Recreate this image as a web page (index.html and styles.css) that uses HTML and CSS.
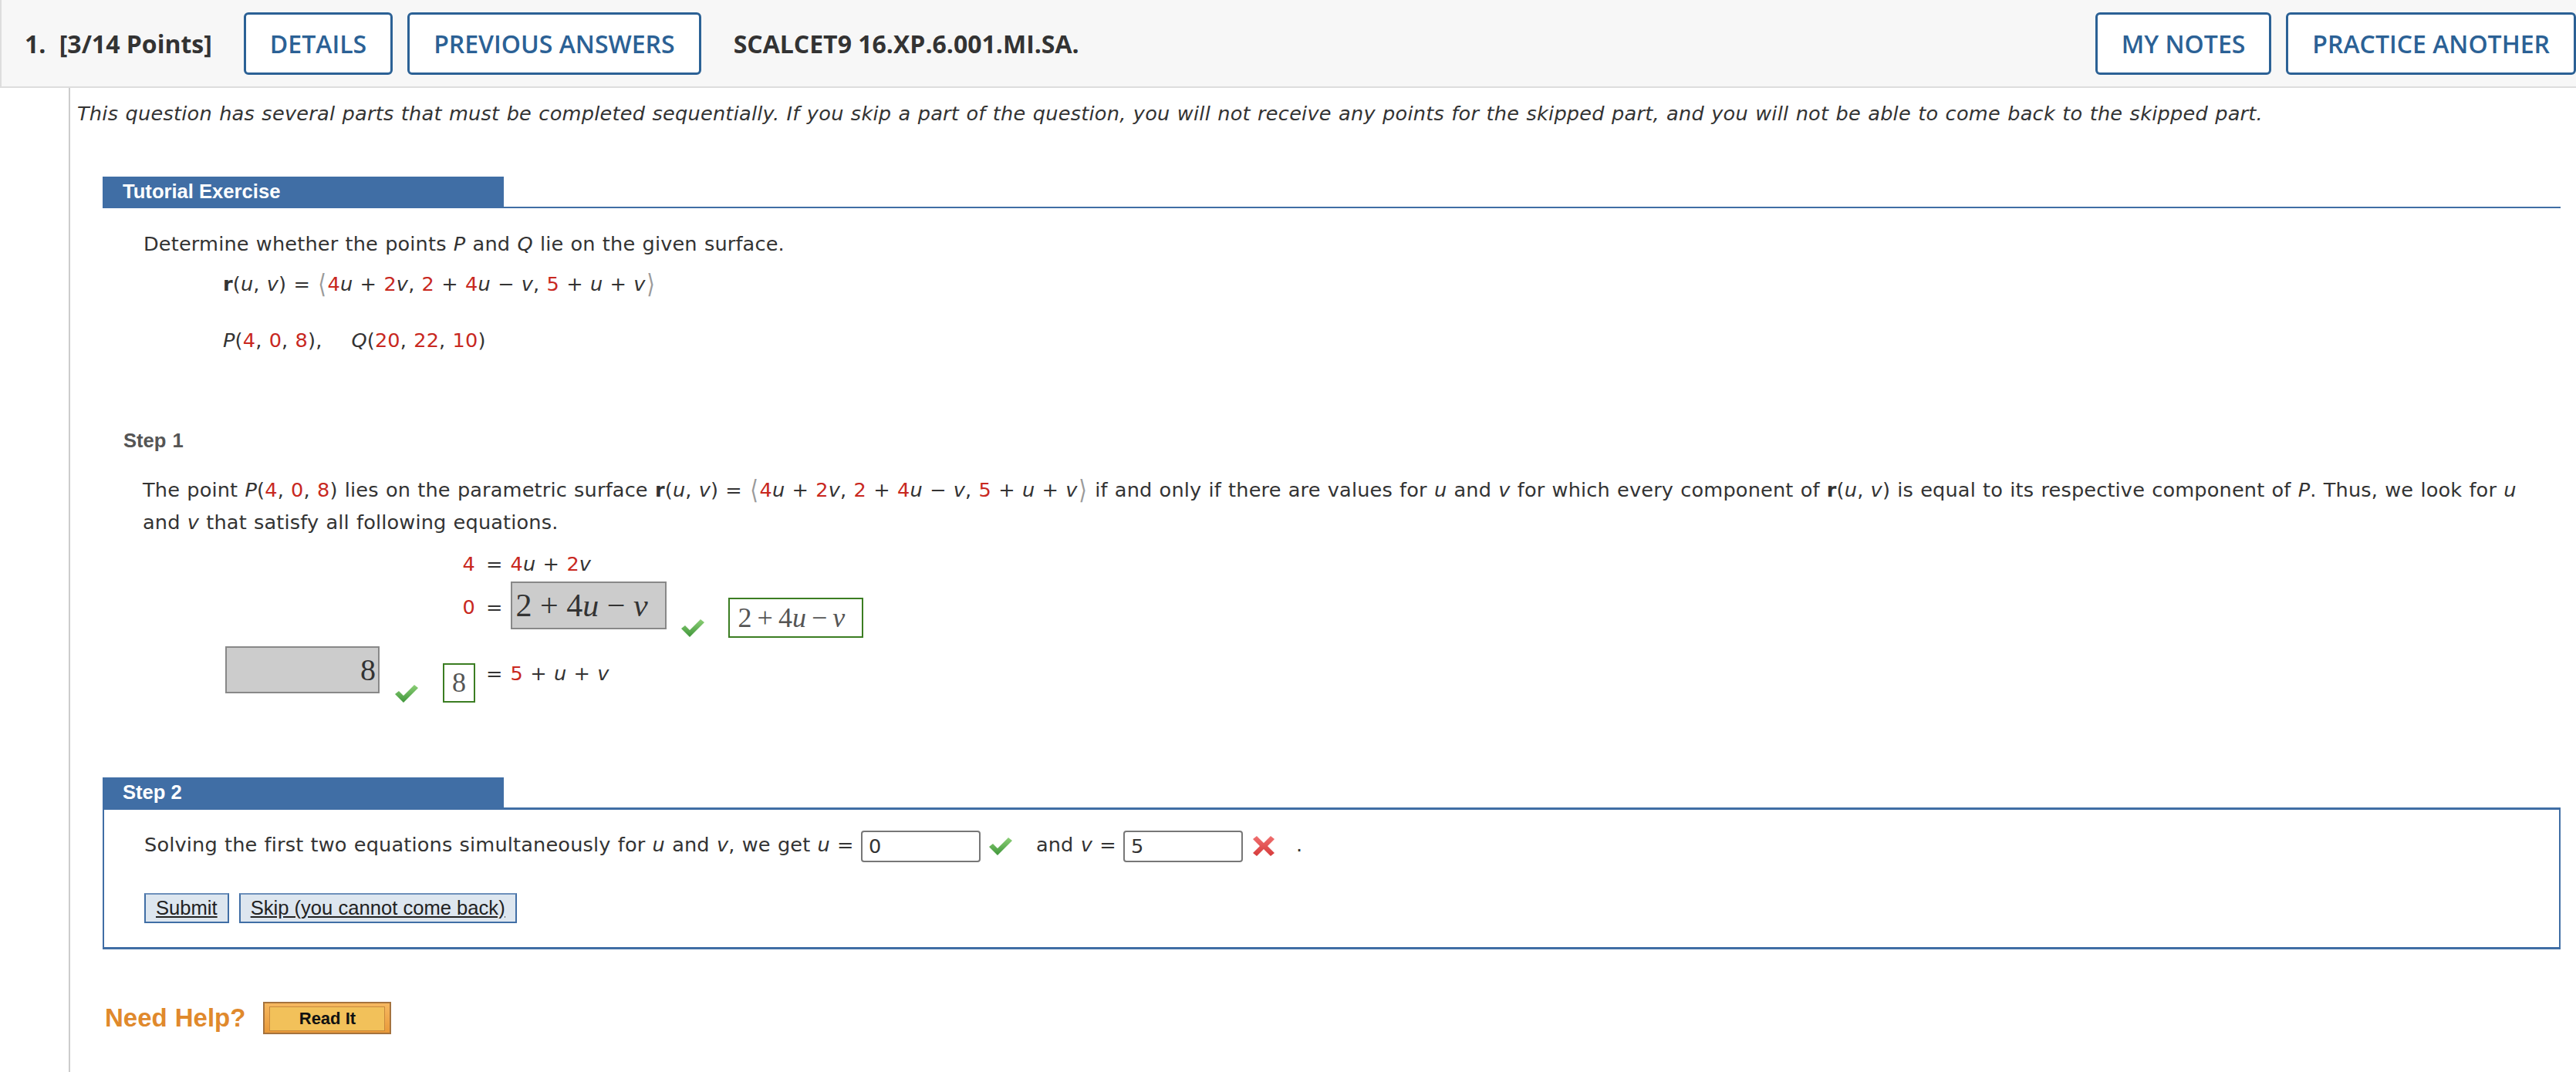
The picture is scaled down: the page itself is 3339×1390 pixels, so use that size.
FILE: index.html
```html
<!DOCTYPE html>
<html lang="en">
<head>
    <meta charset="UTF-8">
    <meta name="viewport" content="width=device-width, initial-scale=1.0">
    <title>SCALCET9 16.XP.6.001.MI.SA.</title>
    <link rel="stylesheet" href="styles.css">
</head>
<body>
    <div class="qheader">
        <div class="qtitle"><span class="qnum">1.</span> [3/14 Points]</div>
        <button class="hbtn first">DETAILS</button>
        <button class="hbtn">PREVIOUS ANSWERS</button>
        <div class="qcode">SCALCET9 16.XP.6.001.MI.SA.</div>
        <button class="hbtn push">MY NOTES</button>
        <button class="hbtn">PRACTICE ANOTHER</button>
    </div>

    <div class="content">
        <p class="intro">This question has several parts that must be completed sequentially. If you skip a part of the question, you will not receive any points for the skipped part, and you will not be able to come back to the skipped part.</p>

        <div class="tutorial">
            <div class="tut-bar"><span class="tab">Tutorial Exercise</span></div>

            <p class="determine">Determine whether the points <i>P</i> and <i>Q</i> lie on the given surface.</p>
            <p class="mline first-m"><b>r</b>(<i>u</i>, <i>v</i>) = <span class="ang">⟨</span><span class="red">4</span><i>u</i> + <span class="red">2</span><i>v</i>, <span class="red">2</span> + <span class="red">4</span><i>u</i> − <i>v</i>, <span class="red">5</span> + <i>u</i> + <i>v</i><span class="ang">⟩</span></p>
            <p class="mline second-m"><i>P</i>(<span class="red">4</span>, <span class="red">0</span>, <span class="red">8</span>),<span class="gap"></span><i>Q</i>(<span class="red">20</span>, <span class="red">22</span>, <span class="red">10</span>)</p>

            <div class="step-title">Step 1</div>
            <p class="step-text">The point <i>P</i>(<span class="red">4</span>, <span class="red">0</span>, <span class="red">8</span>) lies on the parametric surface <b>r</b>(<i>u</i>, <i>v</i>) = <span class="ang">⟨</span><span class="red">4</span><i>u</i> + <span class="red">2</span><i>v</i>, <span class="red">2</span> + <span class="red">4</span><i>u</i> − <i>v</i>, <span class="red">5</span> + <i>u</i> + <i>v</i><span class="ang">⟩</span> if and only if there are values for <i>u</i> and <i>v</i> for which every component of <b>r</b>(<i>u</i>, <i>v</i>) is equal to its respective component of <i>P</i>. Thus, we look for <i>u</i> and <i>v</i> that satisfy all following equations.</p>

            <div class="eqs">
                <div class="lhs"><span class="red">4</span></div>
                <div class="eq">=</div>
                <div class="rhs"><span class="red">4</span><i>u</i> + <span class="red">2</span><i>v</i></div>

                <div class="lhs r2"><span class="red">0</span></div>
                <div class="eq r2">=</div>
                <div class="rhs r2 boxrow">
                    <span class="given wide">2 + 4<i>u</i> − <i>v</i></span>
                    <svg class="check c2" viewBox="0 0 30 25"><defs><linearGradient id="g1" x1="0" y1="0" x2="0" y2="1"><stop offset="0" stop-color="#8ccf76"/><stop offset="1" stop-color="#3f963a"/></linearGradient></defs><polygon points="0,13 5,9 11,15 25,1 30,5 11,24" fill="url(#g1)"/></svg>
                    <span class="correct wide">2 + 4<i>u</i> − <i>v</i></span>
                </div>

                <div class="lhs r3 boxrow">
                    <span class="given num">8</span>
                    <svg class="check c3" viewBox="0 0 30 25"><polygon points="0,13 5,9 11,15 25,1 30,5 11,24" fill="url(#g1)"/></svg>
                    <span class="correct small">8</span>
                </div>
                <div class="eq r3">=</div>
                <div class="rhs r3"><span class="red">5</span> + <i>u</i> + <i>v</i></div>
            </div>

            <div class="step2">
                <div class="tut-bar thick"><span class="tab">Step 2</span></div>
                <div class="step-box">
                    <div class="answer-line">Solving the first two equations simultaneously for <i>u</i> and <i>v</i>, we get <i>u</i> = <input class="ans" type="text" value="0" readonly><svg class="check ok" viewBox="0 0 30 25"><polygon points="0,13 5,9 11,15 25,1 30,5 11,24" fill="url(#g1)"/></svg>and <i>v</i> = <input class="ans" type="text" value="5" readonly><svg class="cross" viewBox="0 0 28 26"><defs><linearGradient id="g2" x1="0" y1="0" x2="0" y2="1"><stop offset="0" stop-color="#f07070"/><stop offset="1" stop-color="#d63a3a"/></linearGradient></defs><polygon points="0,4 5,0 14,9 23,0 28,4 19,13 28,22 23,26 14,17 5,26 0,22 9,13" fill="url(#g2)"/></svg>.</div>
                    <div class="step-btns">
                        <button class="sbtn">Submit</button>
                        <button class="sbtn">Skip (you cannot come back)</button>
                    </div>
                </div>
            </div>

            <div class="need-help">
                <span class="help-label">Need Help?</span>
                <button class="read-it"><span>Read It</span></button>
            </div>
        </div>
    </div>
</body>
</html>
```

FILE: styles.css
```css
body {
    margin: 0;
    overflow: hidden;
    background: #fff;
    color: #333;
    font-family: "DejaVu Sans", Verdana, sans-serif;
    font-size: 25.6px;
    letter-spacing: 0.15px;
    word-spacing: 0.9px;
}
p {
    margin: 0;
}
.red {
    color: #c8281f;
}
.ang {
    display: inline-block;
    color: #9a9a9a;
    font-size: 34px;
    line-height: 20px;
    vertical-align: -3px;
    transform: scaleX(0.8);
}

/* question header */
.qheader {
    display: flex;
    align-items: center;
    height: 112px;
    background: #f7f7f7;
    border-bottom: 2px solid #ddd;
    border-left: 2px solid #ddd;
    font-family: "Open Sans", sans-serif;
    letter-spacing: 0;
    word-spacing: 0;
}
.qtitle {
    margin-left: 30px;
    font-size: 32px;
    font-weight: 700;
    color: #333;
}
.qnum {
    margin-right: 9px;
}
.hbtn {
    height: 81px;
    margin-left: 19px;
    padding: 0 31px;
    background: #fff;
    color: #2b6195;
    border: 3px solid #2b6195;
    border-radius: 6px;
    font-family: "Open Sans", sans-serif;
    font-size: 32px;
    font-weight: 600;
}
.hbtn.first {
    margin-left: 41px;
}
.hbtn.push {
    margin-left: auto;
}
.qcode {
    margin-left: 42px;
    font-size: 32px;
    font-weight: 700;
    color: #333;
}

/* content */
.content {
    margin-left: 89px;
    min-height: 1264px;
    padding: 12px 20px 0 42px;
    border-left: 2px solid #ccc;
}
.intro {
    margin-left: -33px;
    line-height: 42px;
    font-style: italic;
    letter-spacing: 0.23px;
}
.tutorial {
    margin-top: 61px;
}
.tut-bar {
    border-bottom: 2px solid #406ea5;
    line-height: 0;
}
.tut-bar.thick {
    border-bottom-width: 3px;
}
.tab {
    display: inline-block;
    width: 494px;
    height: 39px;
    padding-left: 26px;
    background: #406ea5;
    color: #fff;
    font-family: "Liberation Sans", Arial, sans-serif;
    font-weight: bold;
    font-size: 25.6px;
    line-height: 39px;
    letter-spacing: 0;
    word-spacing: 0;
}
.determine {
    margin: 25px 0 0 53px;
    line-height: 42px;
}
.mline {
    margin-left: 156px;
    line-height: 42px;
}
.first-m {
    margin-top: 10px;
}
.second-m {
    margin-top: 31px;
}
.gap {
    display: inline-block;
    width: 38px;
}
.step-title {
    margin: 94px 0 0 27px;
    color: #555;
    font-family: "Liberation Sans", Arial, sans-serif;
    font-weight: bold;
    font-size: 25.6px;
    line-height: 30px;
    letter-spacing: 0;
}
.step-text {
    margin: 28px 52px 0 52px;
    line-height: 42px;
}

/* equations */
.eqs {
    display: grid;
    grid-template-columns: auto auto auto;
    justify-content: start;
    margin: 12px 0 0 159px;
    line-height: 42px;
}
.lhs {
    text-align: right;
}
.eq {
    padding: 0 10px 0 14px;
}
.r2 {
    margin-top: 2px;
}
.lhs.r2, .eq.r2 {
    line-height: 66px;
}
.r3 {
    margin-top: 11px;
}
.eq.r3, .rhs.r3 {
    margin-top: 25px;
}
.boxrow {
    display: flex;
    align-items: flex-start;
}
.lhs.boxrow {
    justify-content: flex-end;
}
.given {
    box-sizing: border-box;
    background: #ccc;
    border: 2px solid #888;
    color: #333;
    font-family: "Liberation Serif", "Times New Roman", serif;
    letter-spacing: 0;
    word-spacing: 0;
}
.given.wide {
    width: 202px;
    height: 62px;
    padding-left: 5px;
    font-size: 42px;
    line-height: 58px;
    white-space: nowrap;
}
.given.num {
    width: 200px;
    height: 61px;
    padding-right: 3px;
    text-align: right;
    font-size: 40px;
    line-height: 57px;
}
.correct {
    box-sizing: border-box;
    border: 2px solid #3b7d22;
    color: #555;
    font-family: "Liberation Serif", "Times New Roman", serif;
    font-size: 36px;
    letter-spacing: 0;
    word-spacing: -2px;
    white-space: nowrap;
}
.correct.wide {
    width: 175px;
    height: 52px;
    margin: 21px 0 0 31px;
    padding-left: 11px;
    line-height: 48px;
}
.correct.small {
    width: 42px;
    height: 51px;
    margin: 22px 0 0 32px;
    text-align: center;
    line-height: 47px;
}
.check {
    width: 30px;
    height: 25px;
}
.check.c2 {
    margin: 48px 0 0 19px;
}
.check.c3 {
    margin: 49px 0 0 20px;
}

/* step 2 */
.step2 {
    margin-top: 96px;
}
.step-box {
    padding: 24px 52px 31px 52px;
    border-left: 2px solid #406ea5;
    border-right: 2px solid #406ea5;
    border-bottom: 3px solid #406ea5;
}
.answer-line {
    line-height: 42px;
}
.ans {
    box-sizing: border-box;
    width: 155px;
    height: 41px;
    padding: 0 8px;
    border: 2px solid #777;
    border-radius: 4px;
    color: #333;
    font-family: "DejaVu Sans", Verdana, sans-serif;
    font-size: 25.6px;
    vertical-align: middle;
}
.check.ok {
    margin: 0 31px 0 11px;
    vertical-align: middle;
}
.cross {
    width: 28px;
    height: 26px;
    margin: 0 28px 0 13px;
    vertical-align: middle;
}
.step-btns {
    display: flex;
    gap: 13px;
    margin-top: 40px;
}
.sbtn {
    height: 39px;
    padding: 0 13px;
    background: #dde6ef;
    color: #222;
    border: 2px solid #406ea5;
    border-top-color: #6d90bb;
    font-family: "Liberation Sans", Arial, sans-serif;
    font-size: 25.6px;
    text-decoration: underline;
}

/* help */
.need-help {
    display: flex;
    align-items: center;
    gap: 23px;
    margin: 68px 0 0 3px;
}
.help-label {
    color: #e0892c;
    font-family: "Liberation Sans", Arial, sans-serif;
    font-weight: bold;
    font-size: 33px;
    letter-spacing: 0;
}
.read-it {
    box-sizing: border-box;
    width: 166px;
    height: 42px;
    padding: 4px 6px;
    background: linear-gradient(#f6b860, #e99a3a);
    border: 2px solid #a5733e;
}
.read-it span {
    display: block;
    height: 30px;
    background: #f2c15a;
    border: 1px solid #c98a3e;
    color: #111;
    font-family: "Liberation Sans", Arial, sans-serif;
    font-weight: bold;
    font-size: 22px;
    line-height: 29px;
    letter-spacing: 0;
}
```
